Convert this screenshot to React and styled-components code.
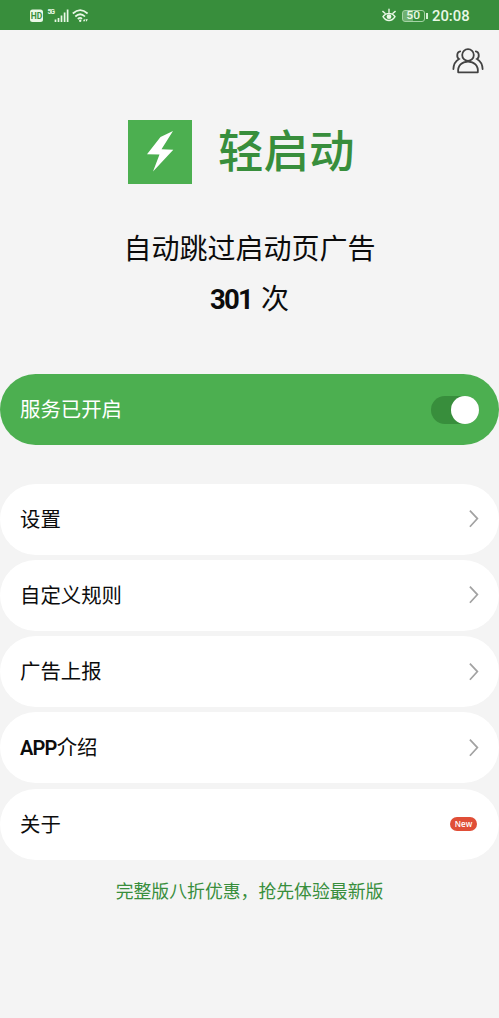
import React from 'react';
import styled, { createGlobalStyle } from 'styled-components';

const entries = [
  { label: '设置' },
  { label: '自定义规则' },
  { label: '广告上报' },
  { latin: 'APP', label: '介绍' },
  { label: '关于', badge: 'New' },
];

function SignalIcons() {
  return (
    <svg width="62" height="18" viewBox="0 0 62 18" fill="none" stroke="#e9f8e6">
      <rect x="1" y="3.5" width="13" height="12.5" rx="2.5" fill="#e9f8e6" stroke="none" />
      <text x="7.5" y="12.8" textAnchor="middle" fontSize="8.5" fontWeight="700" fill="#388e3c" stroke="none">
        HD
      </text>
      <text x="18.5" y="8.3" fontSize="7" fontWeight="700" fill="#e9f8e6" stroke="none" textLength="7.5">
        5G
      </text>
      <path d="M26.5 13.5V16M29.5 12V16M32.5 9.5V16M35.6 6.5V16M38.6 3.5V16" strokeWidth="1.7" />
      <path d="M43.8 7.5Q51.2 0.8 58.6 7.5M46.3 10.5Q51.2 6 56 10.5M48.8 13Q51.2 11 53 12.8" strokeWidth="1.7" />
      <circle cx="51.2" cy="14.8" r="1.2" fill="#e9f8e6" stroke="none" />
      <path d="M54 15.3l1.2-2.6 1.2 2.6zM56.4 13.2l1.2 2.6 1.2-2.6z" fill="#e9f8e6" stroke="none" />
    </svg>
  );
}

function EyeIcon() {
  return (
    <svg width="16" height="14" viewBox="0 0 16 14" fill="none" stroke="#e9f8e6" strokeWidth="1.4" strokeLinecap="round">
      <path d="M2 8.7C5 4.2 11 4.2 14 8.7C11 13.8 5 13.8 2 8.7ZM8 4.5V1.2M4 5.2L1.8 3.4M12 5.2L14.2 3.4" />
      <circle cx="8" cy="8.7" r="2.4" fill="#e9f8e6" stroke="none" />
    </svg>
  );
}

function PeopleIcon() {
  return (
    <svg width="32" height="28" viewBox="0 0 32 28" fill="none" stroke="#424242" strokeWidth="1.8" strokeLinecap="round">
      <circle cx="16" cy="8" r="5.8" />
      <path d="M6.2 25.4C5.4 18.4 10 14.6 16 14.6S26.6 18.4 25.8 25.4Z" strokeLinejoin="round" />
      <path d="M8.2 4.4C4.6 4.8 4.4 10.4 7 12C3.6 14 1.6 17 1.4 22" />
      <path d="M23.8 4.4C27.4 4.8 27.6 10.4 25 12C28.4 14 30.4 17 30.6 22" />
    </svg>
  );
}

function Chevron() {
  return (
    <svg width="10" height="18" viewBox="0 0 10 18" fill="none" stroke="#a2a2a2" strokeWidth="1.7">
      <path d="M0.9 0.6L8.4 8.6L0.9 16.8" />
    </svg>
  );
}

export default function App() {
  return (
    <Screen>
      <GlobalStyle />
      <StatusBar>
        <SignalIcons />
        <StatusRight>
          <EyeIcon />
          <Battery>
            <span>50</span>
          </Battery>
          <Clock>20:08</Clock>
        </StatusRight>
      </StatusBar>
      <Toolbar>
        <PeopleIcon />
      </Toolbar>
      <Brand>
        <Logo>
          <svg width="64" height="64" viewBox="0 0 64 64" fill="#fff">
            <path d="M45 11L32.5 17L19 34.2L31.5 34.6L25 51.5L45.3 29.8L33.5 29.2Z" />
          </svg>
        </Logo>
        <Title>轻启动</Title>
      </Brand>
      <Summary>
        <div>自动跳过启动页广告</div>
        <div>
          <Count>301</Count>次
        </div>
      </Summary>
      <Service>
        <Label>服务已开启</Label>
        <Switch />
      </Service>
      <Menu>
        {entries.map((e) => (
          <Row key={e.label}>
            <Label>
              {e.latin && <Latin>{e.latin}</Latin>}
              {e.label}
            </Label>
            {e.badge ? <Badge>{e.badge}</Badge> : <Chevron />}
          </Row>
        ))}
      </Menu>
      <Promo>完整版八折优惠，抢先体验最新版</Promo>
    </Screen>
  );
}

const GlobalStyle = createGlobalStyle`
  body {
    margin: 0;
    background: #f4f4f4;
  }

  * {
    box-sizing: border-box;
  }

  svg {
    display: block;
    flex: none;
  }
`;

const Screen = styled.div`
  height: 1018px;
  overflow: hidden;
  background: #f4f4f4;
  color: #0c0c0c;
  font-family: Roboto, 'Noto Sans CJK SC', sans-serif;
  white-space: nowrap;
`;

const StatusBar = styled.div`
  display: flex;
  align-items: center;
  justify-content: space-between;
  height: 30px;
  padding: 0 29px;
  background: #388e3c;
`;

const StatusRight = styled.div`
  display: flex;
  align-items: center;
  color: #e9f8e6;
`;

const Battery = styled.div`
  position: relative;
  width: 23px;
  height: 12px;
  margin: 1px 7px 0 5px;
  border: 1px solid #a5d3a5;
  border-radius: 3px;
  background: linear-gradient(90deg, #6fb071 50%, transparent 50%);
  font-size: 11px;
  font-weight: 500;
  line-height: 10.5px;
  text-align: center;

  span {
    display: inline-block;
    transform: scaleX(1.1);
  }

  &::after {
    content: '';
    position: absolute;
    top: 2px;
    right: -4px;
    width: 2px;
    height: 6px;
    background: #d5efd3;
  }
`;

const Clock = styled.div`
  width: 38px;
  padding-top: 2px;
  font-size: 14.8px;
  font-weight: 500;
  line-height: 30px;
`;

const Toolbar = styled.div`
  display: flex;
  justify-content: flex-end;
  height: 89.5px;
  padding: 17px 15px 0 0;
`;

const Brand = styled.div`
  display: flex;
  align-items: center;
  height: 64px;
  padding-left: 128px;
`;

const Logo = styled.div`
  width: 64px;
  height: 64px;
  background: #4caf50;
`;

const Title = styled.div`
  margin-left: 26px;
  padding-top: 2px;
  color: #388e3c;
  font-size: 45.5px;
  font-weight: 500;
  line-height: 64px;
`;

const Summary = styled.div`
  height: 190.5px;
  padding-top: 41px;
  font-size: 28px;
  line-height: 50px;
  text-align: center;
`;

const Count = styled.span`
  display: inline-block;
  margin-right: 9px;
  font-size: 27.5px;
  font-weight: 700;
  letter-spacing: -1.8px;
`;

const Service = styled.div`
  display: flex;
  align-items: center;
  justify-content: space-between;
  height: 71px;
  padding: 0 20px;
  border-radius: 36px;
  background: #4caf50;
  color: #fff;
`;

const Label = styled.span`
  padding-bottom: 3px;
  font-size: 20.4px;
`;

const Switch = styled.div`
  display: flex;
  justify-content: flex-end;
  width: 48px;
  height: 28px;
  border-radius: 14px;
  background: #388e3c;

  &::after {
    content: '';
    width: 28px;
    height: 28px;
    border-radius: 50%;
    background: #fff;
  }
`;

const Menu = styled.div`
  display: grid;
  gap: 5.3px;
  margin-top: 38.6px;
`;

const Row = styled.div`
  display: flex;
  align-items: center;
  justify-content: space-between;
  height: 71px;
  padding: 0 20px;
  border-radius: 36px;
  background: #fff;
`;

const Latin = styled.span`
  font-size: 20px;
  font-weight: 600;
  letter-spacing: -0.8px;
`;

const Badge = styled.span`
  width: 27px;
  height: 14px;
  margin: 0 2px 1px 0;
  border-radius: 7px;
  background: #e04e37;
  color: #fff;
  font-family: 'Open Sans', sans-serif;
  font-size: 8px;
  font-weight: 600;
  line-height: 14px;
  text-align: center;
`;

const Promo = styled.div`
  margin-top: 19px;
  color: #388e3c;
  font-size: 17.85px;
  line-height: 26px;
  text-align: center;
`;
